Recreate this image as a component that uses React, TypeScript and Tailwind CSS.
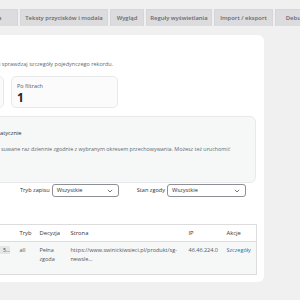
const tabs = [
  { label: 'Treść banera', w: 'w-[70px]' },
  { label: 'Teksty przycisków i modala', w: 'w-[88px]' },
  { label: 'Wygląd', w: 'w-[34px]' },
  { label: 'Reguły wyświetlania', w: 'w-[66px]' },
  { label: 'Import / eksport', w: 'w-[59px]' },
  { label: 'Debug', w: 'w-[40px]' },
]

function Select({ w }: { w: string }) {
  return (
    <div
      className={`${w} h-[13px] shrink-0 flex items-center justify-between rounded-[3px] border border-[#8c8f94] bg-white pl-[4px] pr-[5px] text-[5.7px] text-[#2c3338]`}
    >
      <span>Wszystkie</span>
      <svg width="6" height="4" viewBox="0 0 6 4" fill="none">
        <path d="M0.8 0.8 L3 3 L5.2 0.8" stroke="#50575e" strokeWidth="0.8" />
      </svg>
    </div>
  )
}

export default function App() {
  return (
    <div
      className="w-[300px] h-[300px] overflow-hidden bg-[#f0f0f1] text-[#1d2327]"
      style={{ fontFamily: '"Open Sans", "Noto Sans", sans-serif' }}
    >
      {/* tabs */}
      <div className="flex gap-[2px] pt-[9px] -ml-[52px]">
        {tabs.map((t) => (
          <div
            key={t.label}
            className={`${t.w} h-[17px] shrink-0 flex items-center justify-center border border-[#d5d6d8] border-b-0 bg-[#dcdcde] text-[5.9px] font-semibold text-[#646970] whitespace-nowrap`}
          >
            {t.label}
          </div>
        ))}
      </div>

      {/* main card */}
      <div className="mt-[9px] -ml-[20px] w-[284px] h-[247px] rounded-[6px] bg-white pl-[20px] pr-[8px] pt-[25px]">
        <p className="text-[5.5px] leading-[9px] text-[#646970] whitespace-nowrap -ml-[1px]">
          i sprawdzaj szczegóły pojedynczego rekordu.
        </p>

        {/* stats */}
        <div className="flex gap-[7px] mt-[7px]">
          <div className="-ml-[96px] w-[100px] h-[32px] shrink-0 rounded-[5px] border border-[#e8e9ea] bg-[#fbfbfb]" />
          <div className="w-[107px] h-[32px] shrink-0 rounded-[5px] border border-[#e8e9ea] bg-[#fbfbfb] pl-[5px] pt-[6px]">
            <div className="text-[5.5px] leading-[7px] text-[#50575e]">Po filtrach</div>
            <div className="mt-[2px] text-[12px] leading-[12px] font-bold text-[#1d2327]">1</div>
          </div>
        </div>

        {/* info box */}
        <div className="mt-[8px] -ml-[10px] h-[67px] rounded-[6px] border border-[#e8e9ea] bg-[#f6f7f7] pl-[10px] pt-[12px]">
          <div className="text-[5.7px] leading-[9px] text-[#2c3338] -ml-[1px]">atycznie</div>
          <div className="mt-[7px] text-[5.4px] leading-[9px] text-[#646970] whitespace-nowrap">
            suwane raz dziennie zgodnie z wybranym okresem przechowywania. Możesz też uruchomić
          </div>
        </div>

        {/* filters */}
        <div className="flex items-center mt-[1px] pl-[20px] h-[13px]">
          <span className="text-[5.6px] text-[#2c3338] whitespace-nowrap">Tryb zapisu</span>
          <div className="ml-[2px]">
            <Select w="w-[67px]" />
          </div>
          <span className="ml-[18px] text-[5.6px] text-[#2c3338] whitespace-nowrap">Stan zgody</span>
          <div className="ml-[2px]">
            <Select w="w-[79px]" />
          </div>
        </div>

        {/* table */}
        <table className="mt-[27px] -ml-[10px] w-[266px] table-fixed border-collapse border border-[#dcdcde] text-[5.5px]">
          <colgroup>
            <col className="w-[29px]" />
            <col className="w-[20px]" />
            <col className="w-[31px]" />
            <col className="w-[118px]" />
            <col className="w-[38px]" />
            <col className="w-[30px]" />
          </colgroup>
          <thead>
            <tr className="h-[17px] border-b border-[#dcdcde] bg-white text-left text-[5.8px] text-[#2c3338]">
              <th className="font-normal p-0"></th>
              <th className="font-normal p-0">Tryb</th>
              <th className="font-normal p-0">Decyzja</th>
              <th className="font-normal p-0">Strona</th>
              <th className="font-normal p-0">IP</th>
              <th className="font-normal p-0">Akcje</th>
            </tr>
          </thead>
          <tbody>
            <tr className="h-[33px] bg-[#f6f7f7] align-top text-[#50575e] leading-[9px]">
              <td className="p-0 pt-[4px]">
                <span className="block w-[19px] h-[8px] rounded-[1px] bg-[#e6e6e7] text-right text-[5.2px] leading-[8px] text-[#3c434a] overflow-hidden whitespace-nowrap">
                  5…
                </span>
              </td>
              <td className="p-0 pt-[4px]">all</td>
              <td className="p-0 pt-[4px]">
                Pełna
                <br />
                zgoda
              </td>
              <td className="p-0 pt-[4px] whitespace-nowrap">
                https://www.swinickiwsieci.pl/produkt/sg-
                <br />
                newsle…
              </td>
              <td className="p-0 pt-[4px] whitespace-nowrap">46.46.224.0</td>
              <td className="p-0 pt-[4px] text-[#2271b1]">Szczegóły</td>
            </tr>
          </tbody>
        </table>
      </div>
    </div>
  )
}
